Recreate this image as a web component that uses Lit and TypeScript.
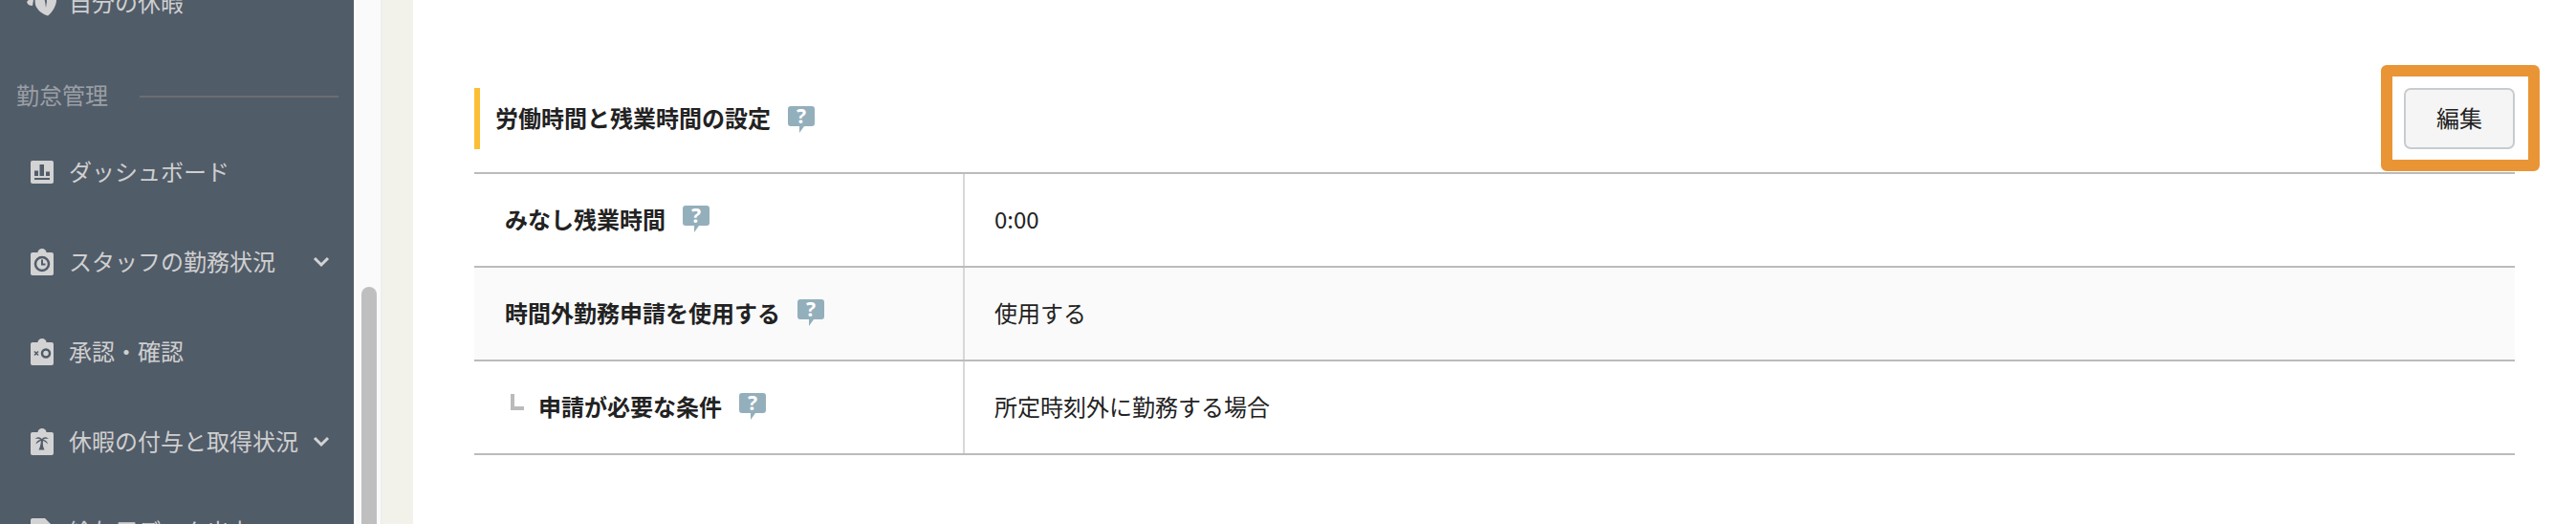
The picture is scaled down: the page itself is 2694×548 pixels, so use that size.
import { LitElement, html, css, svg } from "lit";
import { customElement } from "lit/decorators.js";

const helpIcon = html`<svg class="help" width="28" height="28" viewBox="0 0 28 28" aria-hidden="true">
  <path d="M3 0h22a3 3 0 0 1 3 3v15a3 3 0 0 1-3 3h-8l-5 7v-7H3a3 3 0 0 1-3-3V3a3 3 0 0 1 3-3z" fill="#94afbc"/>
  <text x="14" y="18" text-anchor="middle" class="q">?</text>
</svg>`;

const clipBody = svg`<path d="M2 4h5.500a4.500 4 0 0 1 9 0H22a2 2 0 0 1 2 2v20a2 2 0 0 1-2 2H2a2 2 0 0 1-2-2V6a2 2 0 0 1 2-2z" fill="#d3d3d3"/>`;

const icons = {
  dash: html`<svg width="24" height="24" viewBox="0 0 24 24">
    <rect width="24" height="24" rx="2" fill="#d3d3d3"/>
    <path d="M4 10.500h4v5.500H4zM9.500 4h4.500v12H9.500zM16 11.500h4V16h-4zM4 18h16v2H4z" fill="#515c69"/>
  </svg>`,
  clock: html`<svg width="24" height="28" viewBox="0 0 24 28">
    ${clipBody}
    <circle cx="12" cy="16" r="7" fill="none" stroke="#515c69" stroke-width="2.500"/>
    <path d="M12 11.500V16.500h3.500" fill="none" stroke="#515c69" stroke-width="2"/>
  </svg>`,
  check: html`<svg width="24" height="28" viewBox="0 0 24 28">
    ${clipBody}
    <path d="M4 13.500l4 4M8 13.500l-4 4" stroke="#515c69" stroke-width="1.500"/>
    <circle cx="16" cy="15.500" r="4" fill="none" stroke="#515c69" stroke-width="2.500"/>
  </svg>`,
  palm: html`<svg width="24" height="28" viewBox="0 0 24 28">
    ${clipBody}
    <path d="M12 11.500C10 8.500 7 8.500 4.500 11c2-.5 4.500-.5 6 1C8 12 6 13.500 5.500 16.500c2-2 4-3 5.500-3.500-.5 3.500-1 6.500-2.500 9.500h6c-1.500-3-2-6-1.500-9.500 1.500.5 3.500 1.500 5 3.500-.5-3-2.500-4.500-5-4.500 1.500-1.500 4-1.500 6-1-2.500-2.500-5.500-2.500-7.500.5z" fill="#515c69"/>
  </svg>`,
  heart: html`<svg width="34" height="30" viewBox="0 0 34 30">
    <path d="M0 14 C2 11 5 11 7 12 L6 18 C3 18 1 17 0 14z" fill="#d3d3d3"/>
    <path d="M9 8 C13 6 17 8 19 13 C21 8 26 6 31 8 C32 16 28 24 22 28.500 C17 27 11 23 9 17 C8.500 14 8.500 11 9 8z" fill="#d3d3d3"/>
    <path d="M19 13l1 7 1-7-1-4z" fill="#515c69"/>
  </svg>`,
  doc: html`<svg width="24" height="28" viewBox="0 0 24 28">
    <path d="M2 0h13l9 9v17a2 2 0 0 1-2 2H2a2 2 0 0 1-2-2V2a2 2 0 0 1 2-2z" fill="#d3d3d3"/>
  </svg>`,
};

const chevron = html`<svg class="chev" width="18" height="12" viewBox="0 0 18 12">
  <path d="M2 2l7 7 7-7" fill="none" stroke="#d3d3d3" stroke-width="3"/>
</svg>`;

@customElement("app-root")
export class AppRoot extends LitElement {
  static styles = css`
    :host {
      display: flex;
      width: 2694px;
      height: 548px;
      overflow: hidden;
      background: #fff;
      font-family: "Noto Sans CJK JP", "Noto Sans", sans-serif;
      color: #222;
    }
    .sidebar {
      flex: none;
      width: 370px;
      height: 548px;
      background: #515c69;
      overflow: hidden;
    }
    .side-inner {
      margin-top: -44px;
    }
    .item {
      display: flex;
      align-items: center;
      height: 94px;
      padding-left: 32px;
      font-size: 24px;
      color: #cfcfcf;
      white-space: nowrap;
    }
    .txt {
      margin-bottom: 3px;
    }
    .ico {
      flex: none;
      width: 24px;
      margin-right: 16px;
      display: flex;
      justify-content: center;
    }
    .ico.wide {
      width: 34px;
      margin-left: -4px;
      margin-right: 10px;
    }
    .ico svg {
      display: block;
    }
    .chev {
      margin-left: auto;
      margin-right: 25px;
    }
    .sec-label {
      display: flex;
      align-items: center;
      height: 64px;
      margin-top: 19px;
      padding-left: 17px;
      padding-right: 16px;
      font-size: 24px;
      color: #9a9fa5;
    }
    .sec-label .txt {
      margin-bottom: 5px;
    }
    .sec-label::after {
      content: "";
      flex: 1;
      height: 2px;
      margin-left: 33px;
      background: #6c6e71;
    }
    .track {
      flex: none;
      width: 26px;
      height: 548px;
      box-sizing: border-box;
      margin-left: 2px;
      background: #fafafa;
      padding: 300px 4px 0 6px;
    }
    .edge {
      flex: none;
      width: 2px;
      background: #eeeeee;
    }
    .thumb {
      width: 16px;
      height: 300px;
      border-radius: 8px 8px 0 0;
      background: #bfbfbf;
    }
    .gutter {
      flex: none;
      width: 32px;
      background: #f2f2ea;
    }
    .main {
      flex: 1;
      position: relative;
      padding: 92px 64px 0 64px;
    }
    .head {
      display: flex;
      justify-content: space-between;
      align-items: center;
      height: 64px;
      padding-bottom: 24px;
      border-bottom: 2px solid #bbbbbb;
    }
    .title {
      display: flex;
      align-items: center;
      height: 64px;
      box-sizing: border-box;
      border-left: 6px solid #fbbf36;
      padding-left: 16px;
      font-size: 24px;
      font-weight: 700;
      color: #222;
    }
    .lbl {
      margin-bottom: 3px;
    }
    .help {
      display: block;
      flex: none;
      margin-left: 18px;
      margin-top: 2px;
    }
    .label .help {
      margin-top: -2px;
    }
    .q {
      font: 700 21px "Noto Sans", sans-serif;
      fill: #fff;
    }
    .edit {
      width: 116px;
      height: 64px;
      box-sizing: border-box;
      border: 2px solid #c6ccd0;
      border-radius: 7px;
      background: #f5f5f5;
      font: inherit;
      font-size: 24px;
      font-weight: 400;
      color: #222;
      padding: 0 0 3px;
    }
    .row {
      display: grid;
      grid-template-columns: 511px 1fr;
      height: 98px;
      box-sizing: border-box;
      border-bottom: 2px solid #bbbbbb;
    }
    .row.alt {
      background: #fafafa;
    }
    .label {
      display: flex;
      align-items: center;
      padding-left: 32px;
      font-size: 24px;
      font-weight: 700;
      color: #222;
    }
    .label.sub {
      padding-left: 38px;
    }
    .sub-mark {
      flex: none;
      width: 10px;
      height: 13px;
      margin-right: 15px;
      margin-top: -12px;
      border-left: 4px solid #bbbbbb;
      border-bottom: 4px solid #bbbbbb;
    }
    .value {
      display: flex;
      align-items: center;
      padding: 0 0 3px 31px;
      border-left: 2px solid #d8d8d8;
      font-size: 24px;
      color: #222;
    }
    .mark {
      position: absolute;
      left: 2058px;
      top: 68px;
      width: 166px;
      height: 111px;
      box-sizing: border-box;
      border: 12px solid #e99536;
      border-radius: 6px;
      pointer-events: none;
    }
  `;

  render() {
    return html`
      <nav class="sidebar">
        <div class="side-inner">
          <div class="item"><span class="ico wide">${icons.heart}</span><span class="txt">自分の休暇</span></div>
          <div class="sec-label"><span class="txt">勤怠管理</span></div>
          <div class="item"><span class="ico">${icons.dash}</span><span class="txt">ダッシュボード</span></div>
          <div class="item"><span class="ico">${icons.clock}</span><span class="txt">スタッフの勤務状況</span>${chevron}</div>
          <div class="item"><span class="ico">${icons.check}</span><span class="txt">承認・確認</span></div>
          <div class="item"><span class="ico">${icons.palm}</span><span class="txt">休暇の付与と取得状況</span>${chevron}</div>
          <div class="item"><span class="ico">${icons.doc}</span><span class="txt">給与用データ出力</span></div>
        </div>
      </nav>
      <div class="track"><div class="thumb"></div></div>
      <div class="edge"></div>
      <div class="gutter"></div>
      <main class="main">
        <div class="head">
          <div class="title"><span class="lbl">労働時間と残業時間の設定</span>${helpIcon}</div>
          <button class="edit">編集</button>
        </div>
        <div class="row">
          <div class="label"><span class="lbl">みなし残業時間</span>${helpIcon}</div>
          <div class="value">0:00</div>
        </div>
        <div class="row alt">
          <div class="label"><span class="lbl">時間外勤務申請を使用する</span>${helpIcon}</div>
          <div class="value">使用する</div>
        </div>
        <div class="row">
          <div class="label sub"><span class="sub-mark"></span><span class="lbl">申請が必要な条件</span>${helpIcon}</div>
          <div class="value">所定時刻外に勤務する場合</div>
        </div>
        <div class="mark"></div>
      </main>
    `;
  }
}
